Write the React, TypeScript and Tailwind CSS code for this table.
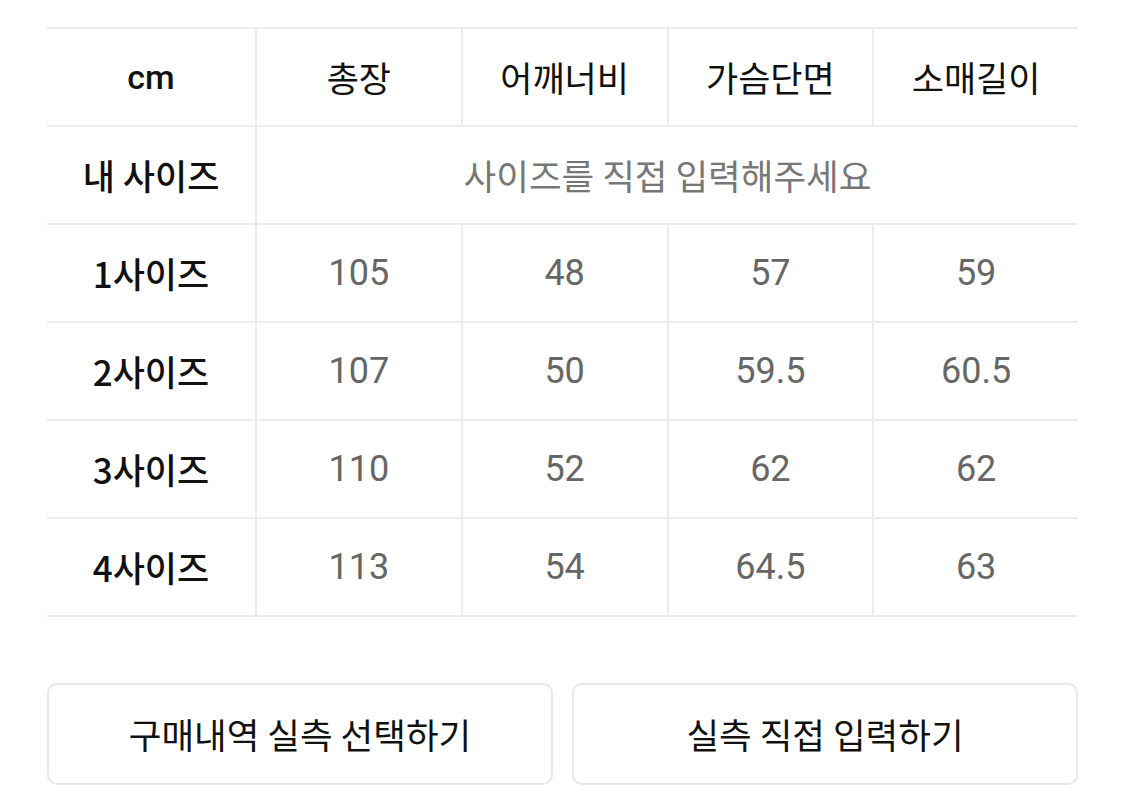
const COLUMNS = ['총장', '어깨너비', '가슴단면', '소매길이'];

const ROWS = [
  { label: '1사이즈', values: ['105', '48', '57', '59'] },
  { label: '2사이즈', values: ['107', '50', '59.5', '60.5'] },
  { label: '3사이즈', values: ['110', '52', '62', '62'] },
  { label: '4사이즈', values: ['113', '54', '64.5', '63'] },
];

const font = { fontFamily: '"Noto Sans CJK KR", "Noto Sans", sans-serif' };
const numFont = { fontFamily: 'Roboto, "Noto Sans", sans-serif' };

export default function App() {
  return (
    <div className="min-h-screen bg-white pl-[47px] pt-[27px]" style={font}>
      <div className="w-[1031px] border-t-2 border-[#ececec]">
        <div className="flex h-[98px] border-b-2 border-[#ececec]">
          <div className="flex w-[208px] items-center justify-center text-[34px] font-medium text-[#111]" style={numFont}>
            cm
          </div>
          {COLUMNS.map((col) => (
            <div
              key={col}
              className="flex flex-1 items-center justify-center border-l-2 border-[#ececec] text-[35px] font-normal text-[#111]"
            >
              {col}
            </div>
          ))}
        </div>
        <div className="flex h-[98px] border-b-2 border-[#ececec]">
          <div className="flex w-[208px] items-center justify-center text-[35px] font-medium text-[#111]">내 사이즈</div>
          <div className="flex flex-1 items-center justify-center border-l-2 border-[#ececec] text-[35.5px] text-[#777]">
            사이즈를 직접 입력해주세요
          </div>
        </div>
        {ROWS.map((row) => (
          <div key={row.label} className="flex h-[98px] border-b-2 border-[#ececec]">
            <div className="flex w-[208px] items-center justify-center text-[35px] font-medium text-[#111]">{row.label}</div>
            {row.values.map((value, i) => (
              <div
                key={i}
                className="flex flex-1 items-center justify-center border-l-2 border-[#ececec] text-[36px] text-[#666]"
                style={numFont}
              >
                {value}
              </div>
            ))}
          </div>
        ))}
      </div>
      <div className="mt-[66px] flex w-[1031px] gap-[19px]">
        <button
          type="button"
          className="flex h-[102px] flex-1 items-center justify-center rounded-[10px] border-2 border-[#e8e8e8] bg-white text-[35.5px] font-normal text-[#111]"
        >
          구매내역 실측 선택하기
        </button>
        <button
          type="button"
          className="flex h-[102px] flex-1 items-center justify-center rounded-[10px] border-2 border-[#e8e8e8] bg-white text-[35.5px] font-normal text-[#111]"
        >
          실측 직접 입력하기
        </button>
      </div>
    </div>
  );
}
